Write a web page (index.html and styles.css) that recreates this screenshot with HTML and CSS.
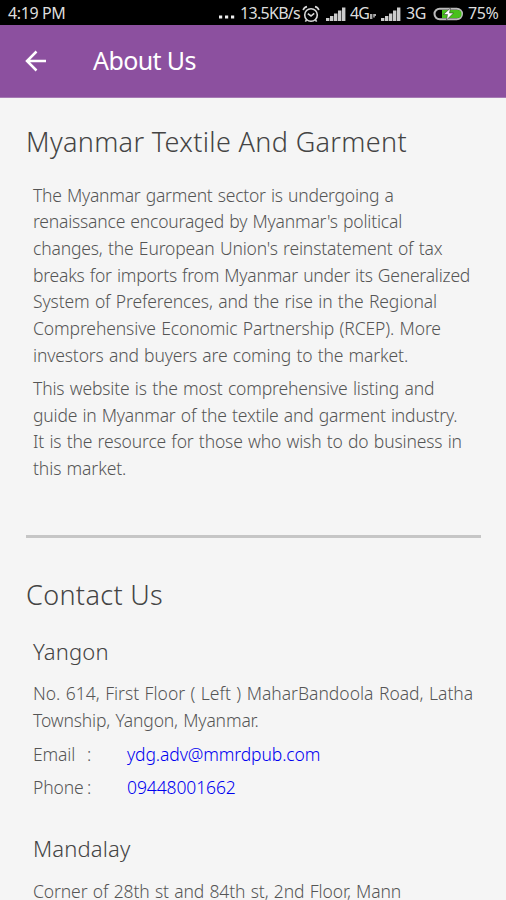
FILE: index.html
```html
<!DOCTYPE html>
<html lang="en">
<head>
    <meta charset="UTF-8">
    <meta name="viewport" content="width=device-width, initial-scale=1.0">
    <title>About Us</title>
    <link rel="stylesheet" href="styles.css">
</head>
<body>

    <!-- Status bar -->
    <div class="status-bar">
        <span class="time">4:19 PM</span>
        <svg class="dots" width="17" height="4" viewBox="0 0 17 4" fill="#eee"><rect x="1" y="0.5" width="3.2" height="3"/><rect x="7" y="0.5" width="3.2" height="3"/><rect x="13" y="0.5" width="3.2" height="3"/></svg>
        <span class="speed">13.5KB/s</span>
        <svg class="alarm" width="18" height="18" viewBox="0 0 18 18" fill="none" stroke="#d8d8d8" stroke-width="1.6">
            <circle cx="9" cy="10" r="6.3"/>
            <path d="M1.2 5.2 Q1.8 2.2 5 1.6 M16.8 5.2 Q16.2 2.2 13 1.6 M5.8 8.6 L9 11 L12.2 8.4 M4.5 14.8 L3.4 16.6 M13.5 14.8 L14.6 16.6"/>
        </svg>
        <svg class="signal signal-1" width="20" height="14" viewBox="0 0 20 14" fill="#ccc">
            <path d="M0 11h3.4v3H0z M4 9h3.4v5H4z M8 6.5h3.4V14H8z M12 3.5h3.4V14H12z M16 0.5h3.4V14H16z"/>
        </svg>
        <span class="net-4g">4G</span>
        <svg class="data" width="7" height="7" viewBox="0 0 7 7" fill="#aaa"><path d="M0 1h2.4v5H0z M3.2 1h2.8v2H4.8v1.6H3.2z"/></svg>
        <svg class="signal signal-2" width="20" height="14" viewBox="0 0 20 14" fill="#ccc">
            <path d="M0 11h3.4v3H0z M4 9h3.4v5H4z M8 6.5h3.4V14H8z M12 3.5h3.4V14H12z M16 0.5h3.4V14H16z"/>
        </svg>
        <span class="net-3g">3G</span>
        <svg class="battery" width="31" height="14" viewBox="0 0 31 14">
            <rect x="1.5" y="1.8" width="27.5" height="10.4" rx="5.2" fill="#000" stroke="#bbb" stroke-width="2"/>
            <path d="M9 3h15.5a4 4 0 0 1 0 8H9z" fill="#48c01c"/>
            <path d="M17.5 1 L10.5 7.5 H14.5 L13.5 13 L20.5 6 H16.5z" fill="#fff" stroke="#222" stroke-width="0.5"/>
        </svg>
        <span class="percent">75%</span>
    </div>

    <!-- Header -->
    <header class="header">
        <svg class="back" width="22" height="22" viewBox="0 0 22 22" fill="none" stroke="#fff" stroke-width="2.5">
            <path d="M21 11H2.5 M11.5 1.5L2 11l9.5 9.5"/>
        </svg>
        <span class="title">About Us</span>
    </header>

    <div class="container">
        <h1>Myanmar Textile And Garment</h1>
        <div class="text">
            <p>
                <span class="tightest">The Myanmar garment sector is undergoing a</span><br>
                <span class="tighter">renaissance encouraged by Myanmar's political</span><br>
                <span class="tight">changes, the European Union's reinstatement of tax</span><br>
                <span class="tightest">breaks for imports from Myanmar under its Generalized</span><br>
                System of Preferences, and the rise in the Regional<br>
                Comprehensive Economic Partnership (RCEP). More<br>
                <span class="tight">investors and buyers are coming to the market.</span>
            </p>
            <p>
                <span class="tight">This website is the most comprehensive listing and</span><br>
                <span class="tighter">guide in Myanmar of the textile and garment industry.</span><br>
                <span class="tight">It is the resource for those who wish to do business in</span><br>
                this market.
            </p>
        </div>

        <hr>

        <h1>Contact Us</h1>
        <div class="text office">
            <h2>Yangon</h2>
            <p>
                <span class="loose">No. 614, First Floor ( Left ) MaharBandoola Road, Latha</span><br>
                <span class="tight">Township, Yangon, Myanmar.</span>
            </p>
            <div class="row"><span class="label">Email</span><span class="colon">:</span><a href="mailto:ydg.adv@mmrdpub.com">ydg.adv@mmrdpub.com</a></div>
            <div class="row"><span class="label">Phone</span><span class="colon">:</span><a href="tel:09448001662">09448001662</a></div>
        </div>
        <div class="text office">
            <h2>Mandalay</h2>
            <p>Corner of 28th st and 84th st, 2nd Floor, Mann</p>
        </div>
    </div>

</body>
</html>
```
FILE: styles.css
```css
* {
    box-sizing: border-box;
}

body {
    margin: 0;
    height: 900px;
    overflow: hidden;
    background-color: #f5f5f5;
    color: #555;
    font-family: 'Noto Sans', 'DejaVu Sans', sans-serif;
}

/* Status bar */
.status-bar {
    display: flex;
    align-items: center;
    height: 25px;
    padding-left: 8px;
    background-color: #000;
    color: #ddd;
    font-size: 16px;
    letter-spacing: -0.4px;
    white-space: nowrap;
}

.status-bar > * {
    flex: none;
}

.time {
    width: 210px;
}

.dots {
    margin-top: 9px;
}

.speed {
    width: 61px;
    margin-left: 5px;
    letter-spacing: -0.7px;
}

.alarm {
    margin-left: 1px;
    margin-top: 3px;
}

.signal {
    margin-top: 2px;
}

.signal-1 {
    margin-left: 6px;
}

.net-4g {
    width: 19px;
    margin-left: 4px;
    letter-spacing: -0.8px;
}

.data {
    margin-top: 7px;
    margin-left: 1px;
}

.signal-2 {
    margin-left: 4px;
}

.net-3g {
    width: 20px;
    margin-left: 5px;
}

.battery {
    margin-left: 7px;
    margin-top: 2px;
}

.percent {
    margin-left: 4px;
}

/* Header */
.header {
    display: flex;
    align-items: center;
    height: 73px;
    padding: 0 25px;
    background-color: #8c509f;
    border-bottom: 1px solid #a67ab4;
    color: #fff;
}

.title {
    margin-left: 46px;
    padding-bottom: 2px;
    font-size: 25px;
    line-height: 34px;
    letter-spacing: -0.6px;
}

/* Content */
.container {
    padding: 25px 25px 0 26px;
}

h1 {
    margin: 0;
    font-size: 27px;
    font-weight: 300;
    line-height: 38px;
    letter-spacing: 0.34px;
    color: #444;
}

h2 {
    margin: 0 0 13.5px;
    font-size: 22px;
    font-weight: 300;
    line-height: 32px;
    letter-spacing: 0.13px;
    color: #444;
}

.text {
    padding-left: 7px;
    padding-top: 20.6px;
    font-size: 17.5px;
    font-weight: 300;
    line-height: 26.7px;
    letter-spacing: -0.11px;
    word-spacing: 0.9px;
    white-space: nowrap;
}

.tight {
    letter-spacing: -0.15px;
}

.tighter {
    letter-spacing: -0.2px;
}

.tightest {
    letter-spacing: -0.23px;
}

.loose {
    letter-spacing: 0;
}

p {
    margin: 0 0 6.3px;
}

hr {
    height: 3px;
    margin: 53px 0 38px;
    border: none;
    background-color: #c6c6c6;
}

.office {
    padding-top: 21px;
}

.office p {
    margin-bottom: 7.3px;
}

.office + .office {
    padding-top: 26px;
}

.row {
    display: flex;
    margin-bottom: 6px;
}

.label {
    width: 54px;
}

.colon {
    width: 40px;
}

a {
    color: #0000f0;
    text-decoration: none;
}
```
